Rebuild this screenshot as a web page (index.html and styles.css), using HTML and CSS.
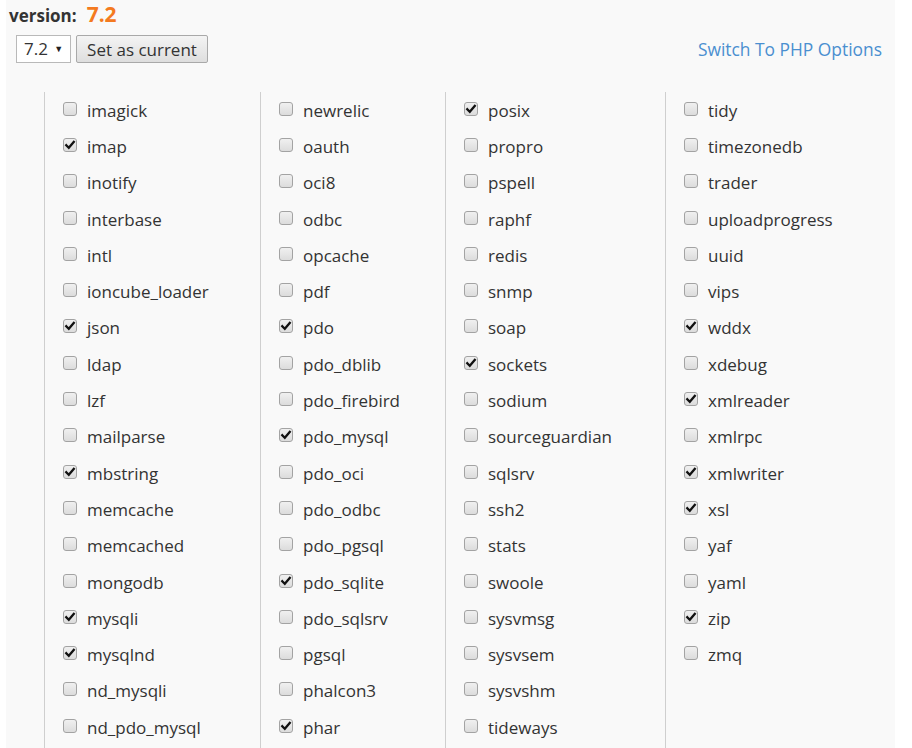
FILE: index.html
```html
<!DOCTYPE html>
<html>
<head>
<meta charset="utf-8">
<link rel="stylesheet" href="styles.css">
</head>
<body>
<div class="page">
  <div class="title"><span class="lbl">version:</span> <span class="ver">7.2</span></div>
  <div class="toolbar">
    <div class="left">
      <div class="select">7.2 <span class="arrow">&#9660;</span></div>
      <button class="btn">Set as current</button>
    </div>
    <a class="link" href="#">Switch To PHP Options</a>
  </div>
  <div class="cols" id="cols"></div>
</div>
<script src="app.js"></script>
</body>
</html>
```
FILE: app.js
```js
var cols = [
  ["imagick","-imap","inotify","interbase","intl","ioncube_loader","-json","ldap","lzf","mailparse","-mbstring","memcache","memcached","mongodb","-mysqli","-mysqlnd","nd_mysqli","nd_pdo_mysql"],
  ["newrelic","oauth","oci8","odbc","opcache","pdf","-pdo","pdo_dblib","pdo_firebird","-pdo_mysql","pdo_oci","pdo_odbc","pdo_pgsql","-pdo_sqlite","pdo_sqlsrv","pgsql","phalcon3","-phar"],
  ["-posix","propro","pspell","raphf","redis","snmp","soap","-sockets","sodium","sourceguardian","sqlsrv","ssh2","stats","swoole","sysvmsg","sysvsem","sysvshm","tideways"],
  ["tidy","timezonedb","trader","uploadprogress","uuid","vips","-wddx","xdebug","-xmlreader","xmlrpc","-xmlwriter","-xsl","yaf","yaml","-zip","zmq"]
];
var check = '<svg width="12" height="12" viewBox="0 0 12 12"><path d="M2.3 6.2 L4.8 8.7 L9.8 2.8" fill="none" stroke="#111" stroke-width="2.3" stroke-linecap="square"/></svg>';
var root = document.getElementById('cols');
var html = '';
cols.forEach(function (c, i) {
  html += '<div class="col c' + (i + 1) + '">';
  c.forEach(function (n) {
    var on = n.charAt(0) === '-';
    var name = on ? n.slice(1) : n;
    html += '<label class="item"><span class="cb">' + (on ? check : '') + '</span><span class="nm">' + name + '</span></label>';
  });
  html += '</div>';
});
root.innerHTML = html;
```
FILE: styles.css
```css
html, body {
  margin: 0;
  padding: 0;
  background: #ffffff;
}
body {
  font-family: "Open Sans", "Liberation Sans", sans-serif;
  color: #333333;
}
.page {
  margin-left: 6px;
  width: 889px;
  height: 748px;
  background: #f9f9f9;
  overflow: hidden;
}
.title {
  padding: 0 0 0 3px;
  height: 32px;
  box-sizing: border-box;
  display: flex;
  align-items: baseline;
  gap: 10px;
}
.lbl {
  font-weight: bold;
  font-size: 17px;
  color: #333;
}
.ver {
  font-weight: bold;
  font-size: 21px;
  color: #f47a20;
}
.toolbar {
  display: flex;
  justify-content: space-between;
  align-items: center;
  padding: 3px 13px 0 10px;
  height: 28px;
}
.left {
  display: flex;
  gap: 5px;
}
.select {
  width: 55px;
  height: 28px;
  box-sizing: border-box;
  border: 1px solid #b9b9b9;
  background: #fff;
  font-size: 17px;
  line-height: 26px;
  padding-left: 7px;
  color: #333;
}
.arrow {
  font-size: 9px;
  vertical-align: 3px;
  margin-left: 2px;
  color: #222;
}
.btn {
  width: 132px;
  height: 28px;
  font-family: "Open Sans", "Liberation Sans", sans-serif;
  font-size: 17px;
  color: #333;
  border: 1px solid #a9a9a9;
  border-radius: 2px;
  background: linear-gradient(#f4f4f4, #dedede);
  padding: 0;
}
.link {
  color: #4a8fd0;
  text-decoration: none;
  font-size: 17.4px;
}
.cols {
  display: grid;
  grid-template-columns: 216px 185px 220px 1fr;
  margin: 29px 0 0 38px;
  height: 700px;
}
.col {
  border-left: 1px solid #cfcfcf;
  padding-left: 18px;
}
.item {
  display: flex;
  align-items: center;
  height: 36.3px;
}
.cb {
  width: 14px;
  height: 14px;
  box-sizing: border-box;
  border: 1px solid #a3a3a3;
  border-radius: 3px;
  background: linear-gradient(#f0f0f0, #dcdcdc);
  display: flex;
  align-items: center;
  justify-content: center;
  margin-top: -3px;
}
.nm {
  margin-left: 10px;
  font-size: 17px;
  color: #333;
}
```
